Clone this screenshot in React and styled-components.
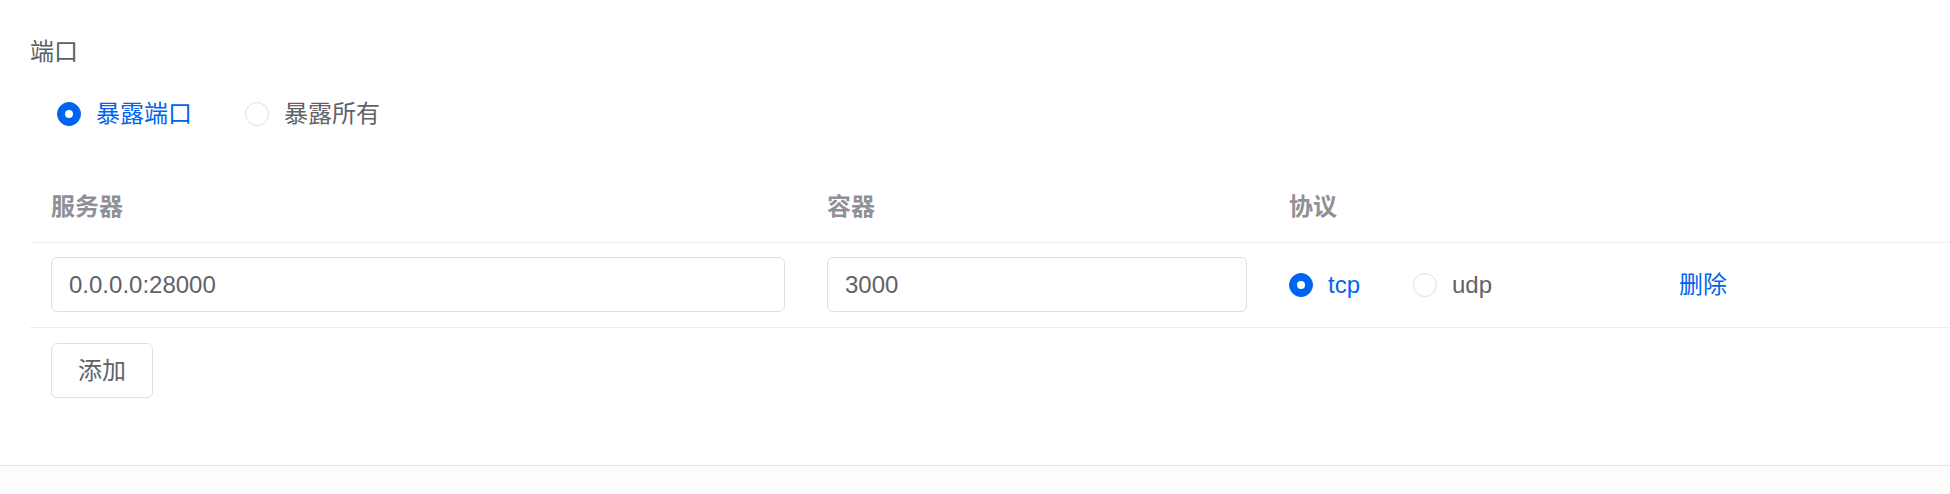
import { useState } from "react";
import styled, { createGlobalStyle } from "styled-components";

const BLUE = "#0064f0";

const GlobalStyle = createGlobalStyle`
  body {
    margin: 0;
    background: #fdfdfe;
    font-family: "Liberation Sans", "Noto Sans CJK SC", sans-serif;
  }
`;

const Panel = styled.section`
  background: #ffffff;
  padding: 34px 0 67px 30px;
  border-bottom: 1px solid #dfe4ee;
  box-shadow: 0 2px 8px rgba(222, 230, 246, 0.35);
  font-size: 24px;
  line-height: 36px;
`;

const Label = styled.div`
  color: #5c5f66;
  margin-bottom: 26px;
`;

const RadioGroup = styled.div`
  display: flex;
  align-items: center;
  padding-left: ${({ $indent }) => $indent || 0}px;
`;

const RadioItem = styled.label`
  display: flex;
  align-items: center;
  gap: 15px;
  margin-right: 53px;
  cursor: pointer;
  color: ${({ $checked }) => ($checked ? BLUE : "#5f6269")};
`;

const Dot = styled.span`
  box-sizing: border-box;
  width: 24px;
  height: 24px;
  border-radius: 50%;
  flex-shrink: 0;
  background: ${({ $checked }) => ($checked ? BLUE : "#fff")};
  border: 1px solid ${({ $checked }) => ($checked ? BLUE : "#dcdfe6")};
  display: flex;
  align-items: center;
  justify-content: center;

  &::after {
    content: "";
    width: 8px;
    height: 8px;
    border-radius: 50%;
    background: #fff;
    display: ${({ $checked }) => ($checked ? "block" : "none")};
  }
`;

const Table = styled.div`
  margin-top: 40px;
`;

const Row = styled.div`
  display: grid;
  grid-template-columns: 776px 462px 390px 1fr;
  align-items: center;
  border-bottom: 1px solid #ebedf3;
  padding: ${({ $head }) => ($head ? "17px 0" : "14px 0 15px")};
`;

const HeadCell = styled.div`
  padding: 0 21px;
  color: #8f9197;
  font-weight: 700;
`;

const Cell = styled.div`
  padding: 0 21px;
  display: flex;
  align-items: center;
`;

const Input = styled.input`
  box-sizing: border-box;
  width: 100%;
  height: 55px;
  padding: 0 17px;
  border: 1px solid #dcdfe6;
  border-radius: 6px;
  font: inherit;
  font-size: 24px;
  color: #5f6269;
  outline: none;
  background: #fff;
`;

const LinkButton = styled.span`
  color: ${BLUE};
  cursor: pointer;
`;

const AddButton = styled.button`
  margin: 15px 0 0 21px;
  height: 55px;
  padding: 0 26px;
  background: #fff;
  border: 1px solid #dcdfe6;
  border-radius: 6px;
  font: inherit;
  font-size: 24px;
  color: #5f6269;
  cursor: pointer;
`;

const Radio = ({ checked, label, onClick }) => (
  <RadioItem $checked={checked} onClick={onClick}>
    <Dot $checked={checked} />
    {label}
  </RadioItem>
);

const App = () => {
  const [mode, setMode] = useState("port");
  const [proto, setProto] = useState("tcp");

  return (
    <>
      <GlobalStyle />
      <Panel>
        <Label>端口</Label>
        <RadioGroup $indent={27}>
          <Radio
            checked={mode === "port"}
            label="暴露端口"
            onClick={() => setMode("port")}
          />
          <Radio
            checked={mode === "all"}
            label="暴露所有"
            onClick={() => setMode("all")}
          />
        </RadioGroup>

        <Table>
          <Row $head>
            <HeadCell>服务器</HeadCell>
            <HeadCell>容器</HeadCell>
            <HeadCell>协议</HeadCell>
            <HeadCell />
          </Row>
          <Row>
            <Cell>
              <Input defaultValue="0.0.0.0:28000" />
            </Cell>
            <Cell>
              <Input defaultValue="3000" />
            </Cell>
            <Cell>
              <RadioGroup>
                <Radio
                  checked={proto === "tcp"}
                  label="tcp"
                  onClick={() => setProto("tcp")}
                />
                <Radio
                  checked={proto === "udp"}
                  label="udp"
                  onClick={() => setProto("udp")}
                />
              </RadioGroup>
            </Cell>
            <Cell>
              <LinkButton>删除</LinkButton>
            </Cell>
          </Row>
        </Table>
        <AddButton>添加</AddButton>
      </Panel>
    </>
  );
};

export default App;
